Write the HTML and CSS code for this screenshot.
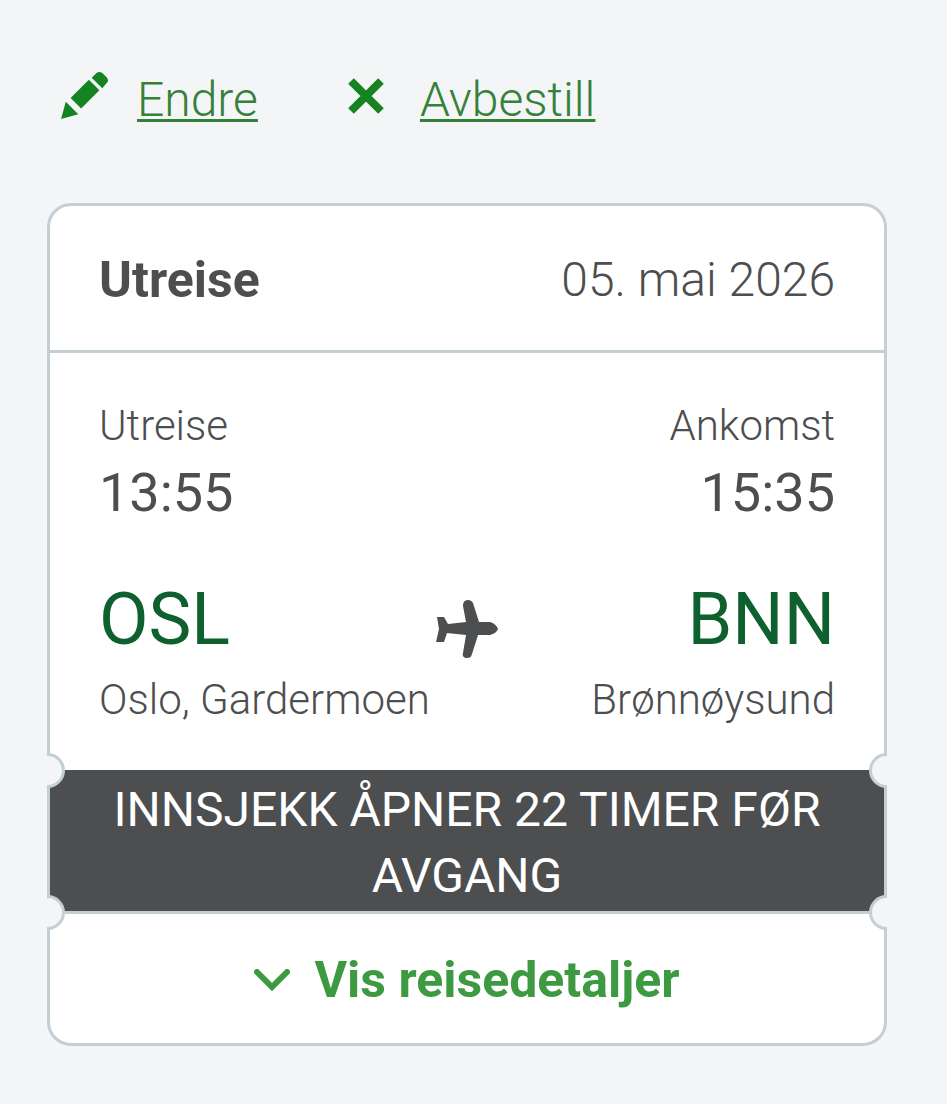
FILE: index.html
```html
<!DOCTYPE html>
<html lang="no">
<head>
    <meta charset="UTF-8">
    <meta name="viewport" content="width=device-width, initial-scale=1.0">
    <title>Din reise</title>
    <link rel="stylesheet" href="styles.css">
</head>
<body>

<nav class="actions">
    <a href="#endre" class="action">
        <svg class="icon-pencil" viewBox="0 0 50 50" aria-hidden="true">
            <path d="M0 50 L5 32 L18 45 Z M10 28 L29 9 L40 20 L21 39 Z M32 7 L37 2 Q40 0 43 2 L48 7 Q50 10 48 12 L43 18 Z"/>
        </svg>
        <span class="action-text">Endre</span>
    </a>
    <a href="#avbestill" class="action">
        <svg class="icon-cross" viewBox="0 0 36 36" aria-hidden="true">
            <path d="M3 3 L33 33 M33 3 L3 33"/>
        </svg>
        <span class="action-text">Avbestill</span>
    </a>
</nav>

<main class="ticket">
    <header class="ticket-header">
        <h2>Utreise</h2>
        <span class="date">05. mai 2026</span>
    </header>

    <section class="flight">
        <div class="row">
            <div>
                <div class="label">Utreise</div>
                <div class="time">13:55</div>
            </div>
            <div class="right">
                <div class="label">Ankomst</div>
                <div class="time">15:35</div>
            </div>
        </div>
        <div class="route">
            <div class="code">OSL</div>
            <svg class="icon-plane" viewBox="0 0 62 58" aria-hidden="true">
                <path d="M1 17 H8 L12 24 L30 22 L27 6 C27 2 29 0 32 0 C34 0 36 1 37 3 L43 22 H54 C58 23 61 26 62 29 C61 32 58 34 54 35 H42 L36 54 C35 57 34 58 31 58 C28 58 26 56 27 53 L30 35 L11 33 L8 42 H0 L3 29 Z"/>
            </svg>
            <div class="code right">BNN</div>
        </div>
        <div class="row">
            <div class="city">Oslo, Gardermoen</div>
            <div class="city">Brønnøysund</div>
        </div>
    </section>

    <div class="checkin">
        <i class="notch notch-left notch-top"></i>
        <i class="notch notch-right notch-top"></i>
        <p>INNSJEKK ÅPNER 22 TIMER FØR AVGANG</p>
        <i class="notch notch-left notch-bottom"></i>
        <i class="notch notch-right notch-bottom"></i>
    </div>

    <button type="button" class="details">
        <svg class="icon-chevron" viewBox="0 0 36 22" aria-hidden="true">
            <path d="M3 3 L18 18 L33 3"/>
        </svg>
        Vis reisedetaljer
    </button>
</main>

</body>
</html>
```
FILE: styles.css
```css
body {
    font-family: Roboto, "Liberation Sans", sans-serif;
    font-size: 48px;
    font-weight: 350;
    line-height: 66px;
    color: #4c4e50;
    background-color: #f3f5f7;
    margin: 0;
    padding: 67px 60px 58px 47px;
}

.actions {
    display: flex;
    gap: 90px;
    margin: 0 14px 70px;
}

.action {
    display: flex;
    color: #35813a;
    text-decoration: none;
}

.action-text {
    text-decoration: underline;
    text-decoration-thickness: 3px;
    text-underline-offset: 3px;
}

.icon-pencil {
    width: 48px;
    height: 50px;
    margin: 3px 28px 0 0;
    fill: #168322;
}

.icon-cross {
    width: 36px;
    height: 36px;
    margin: 11px 36px 0 0;
    fill: none;
    stroke: #168322;
    stroke-width: 8;
}

.ticket {
    background: #fff;
    border: 3px solid #c4ced5;
    border-radius: 24px;
}

.ticket-header {
    display: flex;
    justify-content: space-between;
    padding: 41px 49px 37px;
    border-bottom: 3px solid #c4ced5;
}

h2 {
    font-size: 50px;
    font-weight: bold;
    margin: 0;
}

.flight {
    padding: 43px 49px 40px;
}

.row {
    display: flex;
    justify-content: space-between;
}

.right {
    text-align: right;
}

.label,
.city {
    font-size: 42px;
    line-height: 60px;
}

.time {
    font-size: 54px;
    font-weight: 400;
    line-height: 74px;
}

.route {
    display: grid;
    grid-template-columns: 1fr 62px 1fr;
    margin-top: 40px;
}

.code {
    font-size: 72px;
    font-weight: 400;
    line-height: 100px;
    color: #0e602f;
}

.icon-plane {
    width: 62px;
    height: 58px;
    margin-top: 30px;
    fill: #4c4e50;
}

.checkin {
    position: relative;
    padding: 7px 49px 2px;
    font-weight: 400;
    text-align: center;
    color: #fff;
    background: #4c4e50;
    border-bottom: 3px solid #c4ced5;
}

.checkin p {
    margin: 0;
}

/* half circles punched out of the ticket edge */
.notch {
    position: absolute;
    width: 18px;
    height: 35px;
    box-sizing: border-box;
    background: #f3f5f7;
    border: 3px solid #c4ced5;
}

.notch-left {
    left: -3px;
    border-left: none;
    border-radius: 0 18px 18px 0;
}

.notch-right {
    right: -3px;
    border-right: none;
    border-radius: 18px 0 0 18px;
}

.notch-top {
    top: -17px;
}

.notch-bottom {
    bottom: -19px;
}

.details {
    display: flex;
    justify-content: center;
    align-items: center;
    gap: 24px;
    width: 100%;
    padding: 33px 49px 30px;
    font: bold 50px/66px Roboto, "Liberation Sans", sans-serif;
    color: #3e9a41;
    background: none;
    border: none;
    cursor: pointer;
}

.icon-chevron {
    width: 36px;
    height: 22px;
    fill: none;
    stroke: #3e9a41;
    stroke-width: 6;
    stroke-linecap: round;
}
```
